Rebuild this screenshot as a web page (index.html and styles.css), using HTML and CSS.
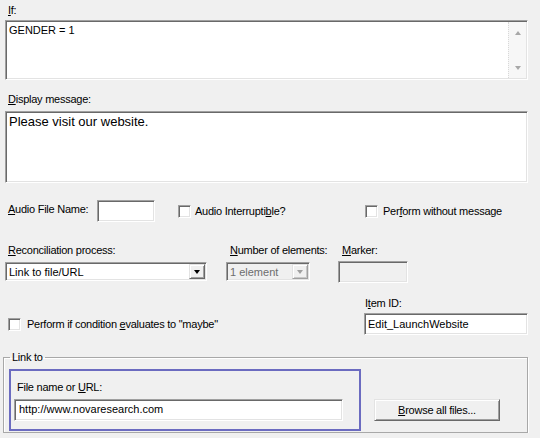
FILE: index.html
```html
<!DOCTYPE html>
<html>
<head>
<meta charset="utf-8">
<link rel="stylesheet" href="styles.css">
</head>
<body>
<div class="dialog">
  <div class="lbl lbl-if"><u>I</u>f:</div>
  <div class="sunken memo memo-if">
    <div class="memo-text">GENDER = 1</div>
    <div class="vscroll">
      <span class="sarrow up"></span>
      <span class="sarrow down"></span>
    </div>
  </div>

  <div class="lbl lbl-msg"><u>D</u>isplay message:</div>
  <div class="sunken memo memo-msg">Please visit our website.</div>

  <div class="row-audio">
    <div class="lbl lbl-audio"><u>A</u>udio File Name:</div>
    <div class="sunken input input-audio"></div>
    <label class="check check-interrupt"><span class="sunken box"></span><span>Audio Interrupti<u>b</u>le?</span></label>
    <label class="check check-without"><span class="sunken box"></span><span>Per<u>f</u>orm without message</span></label>
  </div>

  <div class="row-recon">
    <div class="lbl"><u>R</u>econciliation process:</div>
    <div class="lbl lbl-num"><u>N</u>umber of elements:</div>
    <div class="lbl lbl-num"><u>M</u>arker:</div>
    <div class="sunken select">
      <span class="sel-text">Link to file/URL</span>
      <span class="raised dd"><span class="tri"></span></span>
    </div>
    <div class="sunken select disabled">
      <span class="sel-text">1 element</span>
      <span class="raised dd"><span class="tri"></span></span>
    </div>
    <div class="sunken input input-marker disabled"></div>
  </div>

  <div class="row-maybe">
    <label class="check check-maybe"><span class="sunken box"></span><span>Perform if condition <u>e</u>valuates to "maybe"</span></label>
    <div class="itemid">
      <div class="lbl">I<u>t</u>em ID:</div>
      <div class="sunken input input-item">Edit_LaunchWebsite</div>
    </div>
  </div>

  <fieldset class="linkto">
    <legend>Link to</legend>
    <div class="linkbox">
      <div class="lbl lbl-url">File name or <u>U</u>RL:</div>
      <div class="sunken input input-url">http://www.novaresearch.com</div>
    </div>
    <div class="raised button"><span><u>B</u>rowse all files...</span></div>
  </fieldset>
</div>
</body>
</html>
```
FILE: styles.css
```css
* { box-sizing: border-box; }

body {
  margin: 0;
  background: #f0f0f0;
  font: 11px/13px "Liberation Sans", Arial, sans-serif;
  color: #000;
}

.dialog {
  padding: 4px 12px 0 5px;
}

u { text-decoration: underline; text-underline-offset: 1px; }

.lbl, .check, legend, .button {
  letter-spacing: -0.25px;
}

.lbl {
  height: 13px;
  padding-left: 3px;
  white-space: nowrap;
}

.sunken {
  background: #fff;
  border: 1px solid;
  border-color: #a0a0a0 #ffffff #ffffff #a0a0a0;
  box-shadow: inset 1px 1px 0 #696969, inset -1px -1px 0 #e3e3e3;
}

.raised {
  background: #f0f0f0;
  border: 1px solid;
  border-color: #e3e3e3 #696969 #696969 #e3e3e3;
  box-shadow: inset 1px 1px 0 #ffffff, inset -1px -1px 0 #a0a0a0;
}

/* memos */
.memo-if {
  margin-top: 3px;
  height: 60px;
  display: flex;
}
.memo-if .memo-text { flex: 1; padding: 3px 0 0 3px; }
.vscroll {
  width: 18px;
  margin: 1px 1px 1px 0;
  background: #f7f7f7;
  border-left: 1px dotted #d8d8d8;
  display: flex;
  flex-direction: column;
  justify-content: space-between;
  align-items: center;
  padding: 9px 0 8px;
}
.sarrow {
  width: 0;
  height: 0;
  border-left: 3.5px solid transparent;
  border-right: 3.5px solid transparent;
}
.sarrow.up { border-bottom: 4px solid #a8a8a8; }
.sarrow.down { border-top: 4px solid #a8a8a8; }

.lbl-msg { margin-top: 13px; }
.memo-msg {
  margin-top: 5px;
  height: 72px;
  font-size: 13px;
  line-height: 15px;
  padding: 2px 0 0 3px;
}

/* audio row */
.row-audio {
  margin-top: 17px;
  height: 22px;
  display: flex;
  align-items: flex-start;
}
.lbl-audio { width: 92px; margin-top: 3px; }
.input { height: 22px; }
.input-audio { width: 58px; }

.check {
  display: flex;
  align-items: center;
  gap: 4px;
  white-space: nowrap;
}
.check .box {
  display: block;
  width: 13px;
  height: 13px;
  flex: none;
}
.check-interrupt { margin-left: 23px; margin-top: 5px; width: 187px; }
.check-without { margin-top: 5px; gap: 5px; }

/* reconciliation row */
.row-recon {
  margin-top: 22px;
  display: grid;
  grid-template-columns: 202px 84px 70px;
  column-gap: 19px;
  grid-template-rows: 13px auto;
  row-gap: 5px;
  align-items: start;
}
.row-recon > :nth-child(3), .row-recon > :nth-child(6) { margin-left: 9px; }
.lbl-num { padding-left: 4px; }

.select {
  height: 19px;
  display: flex;
  padding: 1px 2px 1px 2px;
}
.sel-text { flex: 1; padding-left: 1px; line-height: 15px; margin-top: 1px; }
.select .dd {
  width: 16px;
  height: 15px;
  display: flex;
  align-items: center;
  justify-content: center;
  margin-right: -1px;
}
.tri {
  width: 0; height: 0;
  border-left: 3.5px solid transparent;
  border-right: 3.5px solid transparent;
  border-top: 4px solid #000;
  margin-top: 1px;
}
.disabled { background: #f0f0f0; }
.select.disabled .sel-text { color: #6d6d6d; }
.select.disabled .tri { border-top-color: #a0a0a0; }
.select.disabled .dd { box-shadow: inset 1px 1px 0 #ffffff, inset -1px -1px 0 #c8c8c8; border-color: #e3e3e3 #a0a0a0 #a0a0a0 #e3e3e3; }
.input-marker { margin-top: -1px; width: 70px; }

/* maybe row */
.row-maybe {
  margin-top: 14px;
  display: flex;
  justify-content: space-between;
  align-items: flex-start;
}
.check-maybe { margin-top: 21px; margin-left: 3px; gap: 6px; }
.itemid { width: 164px; }
.itemid .lbl { padding-left: 1px; }
.input-item { margin-top: 3px; padding: 4px 0 0 3px; }

/* link to */
.linkto {
  margin: 16px 0 0 -2px;
  padding: 5px 0 1px 0;
  min-width: 0;
  border: 1px solid #a8a8a8;
  box-shadow: inset 1px 1px 0 #fff, 1px 1px 0 #fff;
  display: flex;
  align-items: flex-start;
}
.linkto legend {
  margin-left: 6px;
  padding: 0 2px;
  line-height: 13px;
}
.linkbox {
  margin-left: 5px;
  width: 352px;
  height: 62px;
  border: 2px solid #6b6bc0;
  padding: 10px 0 0 3px;
}
.input-url { width: 329px; margin-top: 5px; padding: 3px 0 0 4px; }
.button {
  margin: 30px 0 0 13px;
  width: 126px;
  height: 22px;
  display: flex;
  align-items: center;
  justify-content: center;
  padding-top: 1px;
}
```
